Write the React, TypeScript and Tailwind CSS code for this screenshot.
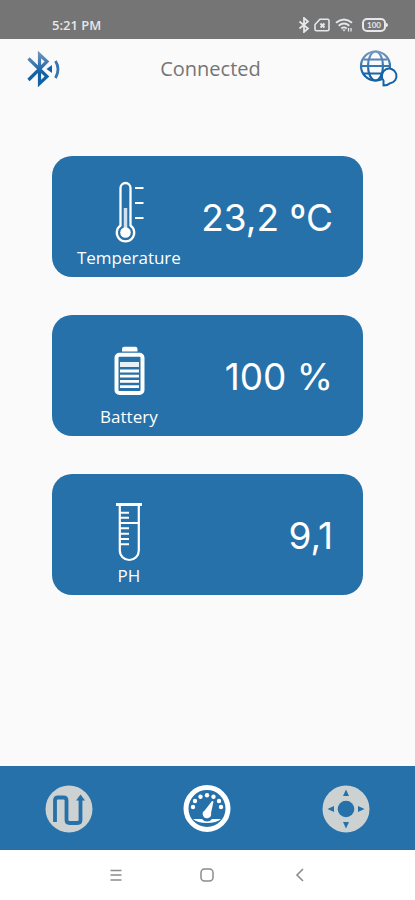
import type { ReactNode } from 'react'

type Reading = {
  label: string
  value: string
  icon: ReactNode
}

function StatusIcons() {
  return (
    <div className="flex items-center gap-1 text-gray-200">
      <svg className="h-4 w-3" viewBox="0 0 12 16" fill="none" stroke="currentColor" strokeWidth="1.8">
        <path d="M1.5 4.5 10 11.5 6 15V1l4 3.5-8.5 7" />
      </svg>
      <svg className="h-4 w-4" viewBox="0 0 16 16" fill="none" stroke="currentColor" strokeWidth="1.6">
        <path d="M6 2.2h7.5Q15 2.2 15 4v8.3Q15 13.8 13.5 13.8H2.5Q1 13.8 1 12.3V7.5Z" />
        <path d="m6.5 6.5 4 4m0-4-4 4" strokeWidth="2" />
      </svg>
      <svg className="h-4 w-5" viewBox="0 0 20 16" fill="none" stroke="currentColor" strokeWidth="1.9">
        <path d="M2 5.8Q10-.8 18 5.8M4.7 8.7q5.300-4.200 10.600 0M7.3 11.4q2.700-2 5.400 0" />
        <path d="m8.3 12.5 1.700 2 1.700-2Z" fill="currentColor" stroke="none" />
        <path d="M14.5 11v3.5M17 11v3.5" strokeWidth="1.3" />
      </svg>
      <div className="ml-1 flex items-center">
        <span className="flex h-[14px] w-6 items-center justify-center rounded-[5px] border-2 border-gray-200 text-[8px] leading-none font-bold">
          100
        </span>
        <span className="h-1 w-[2px] rounded-r bg-gray-200" />
      </div>
    </div>
  )
}

function BluetoothIcon() {
  return (
    <svg className="h-10 w-9" viewBox="0 0 36 40" fill="none">
      <defs>
        <linearGradient id="bt" x1="0" y1="0" x2="0" y2="40" gradientUnits="userSpaceOnUse">
          <stop offset="0.1" stopColor="#6b93c0" />
          <stop offset="0.6" stopColor="#1262a5" />
        </linearGradient>
      </defs>
      <path d="M2.5 9.5 21 27.5 13.500 34.500V5.500L21 12.500 2.500 31" stroke="url(#bt)" strokeWidth="3.200" />
      <path d="M20.500 20 26 16v8Z" fill="#1262a5" />
      <path d="M29.500 12q5 8 0 17" stroke="#3677b0" strokeWidth="2.800" />
    </svg>
  )
}

function GlobeIcon() {
  return (
    <svg className="h-10 w-10" viewBox="0 0 40 40" fill="none">
      <defs>
        <linearGradient id="globe" x1="0" y1="0" x2="0" y2="40" gradientUnits="userSpaceOnUse">
          <stop offset="0.05" stopColor="#7798c0" />
          <stop offset="0.65" stopColor="#1262a5" />
        </linearGradient>
      </defs>
      <g stroke="url(#globe)" strokeWidth="2.200">
        <circle cx="16.500" cy="17" r="14.500" />
        <ellipse cx="16.500" cy="17" rx="7.500" ry="14.500" />
        <path d="M2 17h29M4.500 10.500h24M4.500 24.500h24" />
      </g>
      <path
        d="M24.500 36.500V31.500A7.300 7.300 0 1 1 31 34.200Q28.500 36.500 24.500 36.500Z"
        fill="#fafafa"
        stroke="#1262a5"
        strokeWidth="2"
        strokeLinejoin="round"
      />
    </svg>
  )
}

function ThermometerIcon() {
  return (
    <svg className="h-16 w-16" viewBox="0 0 64 64" fill="none" stroke="#fff" strokeWidth="2.300">
      <path d="M23.500 45.500V8a5 5 0 0 1 10 0v37.500a8.700 8.700 0 1 1-10 0Z" />
      <path d="M28.500 28v24" stroke="#cfe0ef" strokeWidth="3.500" />
      <circle cx="28.500" cy="52.500" r="5.300" fill="#fff" stroke="none" />
      <path d="M38 8h8.500M38 23h8.500M38 38h8.500" strokeWidth="2" />
    </svg>
  )
}

function BatteryIcon() {
  return (
    <svg className="h-16 w-16" viewBox="0 0 64 64" fill="none" stroke="#fff">
      <path d="M25 12.500V10q0-2.200 2.200-2.200h11Q40.500 7.800 40.500 10v2.500Z" fill="#fff" stroke="none" />
      <rect x="19.500" y="15.700" width="26" height="38.300" rx="3" strokeWidth="4" />
      <path d="M23 25.500h19" stroke="#e8f0f7" strokeWidth="5" />
      <path d="M23 32h19M23 37.200h19M23 42.400h19M23 47.600h19" strokeWidth="2.800" />
    </svg>
  )
}

function TestTubeIcon() {
  return (
    <svg className="h-16 w-16" viewBox="0 0 64 64" fill="none" stroke="#fff" strokeWidth="2.200">
      <path d="M19 6.500h26" strokeWidth="3" />
      <path d="M22.800 7v45.500a9.500 9.500 0 0 0 19 0V7" />
      <path d="M23 14.700h9M23 19.700h9M23 25h19M23 30.300h9M23 35.700h9M23 41h9M23 46.300h9" strokeWidth="2" />
    </svg>
  )
}

function RouteIcon() {
  return (
    <svg className="h-12 w-12" viewBox="0 0 48 48" fill="none">
      <circle cx="24" cy="24" r="23.500" fill="#ccd1d1" />
      <path
        d="M10 37V15.500q0-3 3-3h5.500q3 0 3 3v19.500q0 3 3 3h8q3 0 3-3V14"
        stroke="#2671a9"
        strokeWidth="3.800"
      />
      <path d="m31 15.500 4.500-6 4.500 6Z" fill="#2671a9" />
    </svg>
  )
}

function GaugeIcon() {
  return (
    <svg className="h-12 w-12" viewBox="0 0 48 48" fill="#fff">
      <circle cx="24" cy="23.500" r="21" fill="none" stroke="#fff" strokeWidth="5" />
      <circle cx="10" cy="22" r="2.200" />
      <circle cx="12" cy="16" r="2.200" />
      <circle cx="17.500" cy="11.800" r="2.200" />
      <circle cx="24" cy="10.200" r="2.200" />
      <circle cx="30.500" cy="11.800" r="2.200" />
      <circle cx="36" cy="16" r="2.200" />
      <circle cx="38" cy="22" r="2.200" />
      <path d="m29 16 1.500.6-2.500 11.400a4.200 4.200 0 1 1-6.300-2.500Z" />
      <path d="M10 34h9q2 2.500 5 2.500t5-2.500h9q-4.500 4-14 4t-14-4Z" />
    </svg>
  )
}

function ControlPadIcon() {
  return (
    <svg className="h-12 w-12" viewBox="0 0 48 48" fill="#2671a9">
      <circle cx="24" cy="24" r="23.500" fill="#ccd1d1" />
      <circle cx="24" cy="24" r="8.300" />
      <path d="m24 4.500 3 6.500h-6ZM24 43.500l3-6.500h-6ZM5.500 24l6.500-3v6ZM42.500 24l-6.500-3v6Z" />
    </svg>
  )
}

const readings: Reading[] = [
  { label: 'Temperature', value: '23,2 ºC', icon: <ThermometerIcon /> },
  { label: 'Battery', value: '100 %', icon: <BatteryIcon /> },
  { label: 'PH', value: '9,1', icon: <TestTubeIcon /> },
]

const tabs = [
  { name: 'Route', icon: <RouteIcon /> },
  { name: 'Readings', icon: <GaugeIcon /> },
  { name: 'Control', icon: <ControlPadIcon /> },
]

function ReadingCard({ label, value, icon }: Reading) {
  return (
    <section className="flex items-center justify-between rounded-[20px] bg-[#2671a9] pt-6 pr-[30px] pb-[9px] pl-6 text-white">
      <div className="flex w-[106px] flex-col items-center gap-1">
        {icon}
        <h2 className="font-['Open_Sans',sans-serif] text-[17px] leading-5">{label}</h2>
      </div>
      <p className="pb-3 font-['Inter',sans-serif] text-[37px] leading-[48px] whitespace-nowrap">{value}</p>
    </section>
  )
}

export default function App() {
  return (
    <div className="flex min-h-screen flex-col bg-[#fafafa] font-['Lato',sans-serif]">
      <div className="flex h-[39px] items-center justify-between bg-[#757575] pt-[10px] pr-[27px] pl-[52px]">
        <span className="font-['Open_Sans',sans-serif] text-[13px] leading-4 font-semibold text-gray-200">5:21 PM</span>
        <StatusIcons />
      </div>

      <header className="flex h-[60px] items-center justify-between pr-4 pl-[26px]">
        <button type="button" aria-label="Bluetooth">
          <BluetoothIcon />
        </button>
        <h1 className="font-['Open_Sans',sans-serif] text-[20px] leading-6 text-[#757575]">Connected</h1>
        <button type="button" aria-label="Language">
          <GlobeIcon />
        </button>
      </header>

      <main className="mx-auto flex w-3/4 flex-1 flex-col gap-[38px] pt-[57px] pb-10">
        {readings.map((reading) => (
          <ReadingCard key={reading.label} {...reading} />
        ))}
      </main>

      <nav className="grid h-[84px] grid-cols-3 items-center justify-items-center bg-[#2671a9] pt-[2px]">
        {tabs.map((tab) => (
          <button key={tab.name} type="button" aria-label={tab.name}>
            {tab.icon}
          </button>
        ))}
      </nav>

      <div className="grid h-[50px] grid-cols-3 items-center justify-items-center bg-white px-[70px] text-[#8c8c8c]">
        <button type="button" aria-label="Menu">
          <svg className="h-4 w-4" viewBox="0 0 16 16" fill="none" stroke="currentColor" strokeWidth="1.5">
            <path d="M2.500 3.500h11M2.500 8h11M2.500 13h11" />
          </svg>
        </button>
        <button type="button" aria-label="Home">
          <svg className="h-4 w-4" viewBox="0 0 16 16" fill="none" stroke="currentColor" strokeWidth="1.5">
            <rect x="2" y="2" width="12" height="12" rx="3.5" />
          </svg>
        </button>
        <button type="button" aria-label="Back">
          <svg className="h-4 w-4" viewBox="0 0 16 16" fill="none" stroke="currentColor" strokeWidth="1.6">
            <path d="m12 2-6 6 6 6" />
          </svg>
        </button>
      </div>
    </div>
  )
}
